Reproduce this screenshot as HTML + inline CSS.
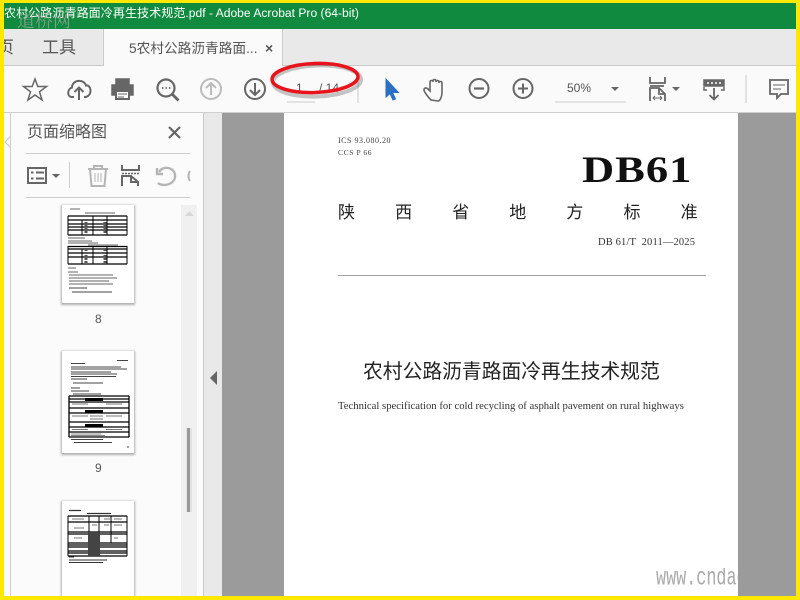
<!DOCTYPE html>
<html><head><meta charset="utf-8">
<style>
html,body{margin:0;padding:0;width:800px;height:600px;overflow:hidden;background:#fff}
body{position:relative;font-family:"Liberation Sans","Noto Sans CJK SC",sans-serif}
.a{position:absolute;white-space:nowrap}
svg{position:absolute;overflow:visible}
.thumb{position:absolute;left:62px;width:72px;background:#fff;box-shadow:0 1px 2px 1px rgba(0,0,0,.3);overflow:hidden}
</style></head><body>

<!-- title -->
<div class="a" style="left:0;top:3px;width:800px;height:26px;background:#0f8a3e"></div>
<div class="a" style="left:4px;top:4px;color:#fff;font-size:12.100px;line-height:18px">农村公路沥青路面冷再生技术规范.pdf - Adobe Acrobat Pro (64-bit)</div>
<!-- tabs -->
<div class="a" style="left:0;top:29px;width:800px;height:36px;background:#e9e9e9;border-bottom:1px solid #c8c8c8"></div>
<div class="a" style="left:103px;top:29px;width:180px;height:37px;background:#fafafa;border-left:1px solid #ccc;border-right:1px solid #ccc;box-sizing:border-box"></div>
<div class="a" style="left:-3px;top:38px;font-size:17px;color:#555;line-height:20px">页</div>
<div class="a" style="left:42px;top:38px;font-size:17px;color:#555;line-height:20px">工具</div>
<div class="a" style="left:129px;top:40px;font-size:13.700px;color:#555;line-height:18px">5农村公路沥青路面...</div>
<div class="a" style="left:265px;top:39px;font-size:14px;color:#555;font-weight:bold;line-height:18px">×</div>
<!-- toolbar -->
<div class="a" style="left:0;top:66px;width:800px;height:46px;background:#fafafa;border-bottom:2px solid #cfcfcf"></div>

<svg style="left:0;top:0" width="800" height="112" fill="none" stroke="#666" stroke-width="2">
 <path d="M35 79l2.800 7.500h8.700l-7 5.300 2.600 8.200-7.100-5-7.100 5 2.600-8.200-7-5.300h8.700z" stroke-width="1.500"/>
 <path d="M74 97h-2c-5 0-5-8 0-9.500 0-8 12-9 14-2 5-1 7 9 0 11.500h-2M79 100V88M74.500 92l4.500-4.500 4.500 4.500"/>
 <path d="M116 85v-6h13v6M116 95h-4v-10h21v10h-4" fill="#666" stroke-width="1.500"/><rect x="116" y="91" width="13" height="8" fill="#fff"/><path d="M118 94h9M118 97h6" stroke-width="1"/>
 <circle cx="166" cy="88" r="8.500" stroke-width="2.200"/><path d="M172 94l6.500 6.500" stroke-width="2.800"/><path d="M162 88h1.500M165.500 88h1.500M169 88h1.500" stroke-width="1.800"/>
 <g stroke="#bcbcbc"><circle cx="211" cy="89" r="10"/><path d="M211 95V83M206 88l5-5 5 5"/></g>
 <circle cx="255" cy="89" r="10"/><path d="M255 83v12M250 90l5 5 5-5"/>
 <path d="M287 102h28M358 78v25" stroke="#ccc" stroke-width="1"/>
 <path d="M386 79v18l4-3.500 3 6.500 2.500-1-3-6.500h6z" fill="#2a6fc4" stroke="#2a6fc4" stroke-width="1"/>
 <path d="M431 100c-2-2-7-8-7-10 0-2 2-3 4-1l2 2v-9c0-2 3-2 3 0v-1c0-2 3-2 3 0v1c0-2 3-2 3 0v1c0-2 3-2 3 0v9c0 5-2 9-4 9z" stroke-width="1.600"/>
 <circle cx="479" cy="88.500" r="9.500"/><path d="M474 88.500h10" stroke-width="2.200"/>
 <circle cx="523" cy="88.500" r="9.500"/><path d="M518 88.500h10M523 83.500v10"/>
 <path d="M555 102h71" stroke="#ccc" stroke-width="1"/>
 <path d="M611 87h8l-4 4z" fill="#666" stroke="none"/>
 <path d="M650 77v6h15v-6M650 86h14M650 101v-13h9l6 6v7M659 88v6h6" stroke-width="1.800"/>
 <path d="M653 98h9M653 98l2-2M653 98l2 2M662 98l-2-2M662 98l-2 2" stroke-width="1"/>
 <path d="M672 87h8l-4 4z" fill="#666" stroke="none"/>
 <rect x="704" y="80" width="20" height="6" fill="#666" stroke-width="1.500"/><path d="M707 83h2M711 83h2M715 83h2M719 83h2" stroke="#fff" stroke-width="1.500"/><path d="M704 87v3h3M724 87v3h-3" stroke-width="1.500"/>
 <path d="M714 88v11M709.500 95l4.500 4.500 4.500-4.500" stroke-width="1.800"/>
 <path d="M746 75v28" stroke="#c8c8c8" stroke-width="1"/>
 <path d="M770 80h18v14h-7l-4 4v-4h-7z" stroke-width="1.800"/><path d="M773 85h12M773 89h8" stroke-width="1"/>
</svg>
<div class="a" style="left:296px;top:81px;font-size:12px;color:#555;line-height:14px">1</div>
<div class="a" style="left:319px;top:81px;font-size:12px;color:#555;line-height:14px">/ 14</div>
<div class="a" style="left:567px;top:81px;font-size:12px;color:#555;line-height:14px">50%</div>

<!-- sidebar -->
<div class="a" style="left:0;top:113px;width:204px;height:487px;background:#fbfbfb"></div>
<div class="a" style="left:10px;top:113px;width:1px;height:487px;background:#cfcfcf"></div>
<div class="a" style="left:203px;top:113px;width:19px;height:487px;background:#e9e9e9;border-left:1px solid #c8c8c8;box-sizing:border-box"></div>
<div class="a" style="left:181px;top:205px;width:16px;height:395px;background:#f0f0f0"></div>
<div class="a" style="left:186px;top:428px;width:6px;height:84px;background:#e2e2e2"></div>
<div class="a" style="left:187px;top:428px;width:3px;height:84px;background:#999"></div>
<svg style="left:0;top:0" width="222" height="400" fill="none" stroke="#666" stroke-width="2">
 <path d="M10 137l-5 5 5 5" stroke="#ccc" stroke-width="1" fill="#fbfbfb"/>
 <path d="M26 153.500h164M26 197.500h164" stroke="#ccc" stroke-width="1"/>
 <path d="M169 127l11 11M180 127l-11 11" stroke-width="2.200"/>
 <rect x="28" y="168" width="18" height="15" stroke-width="2"/><path d="M31 172.500h2.500M31 178.500h2.500M36 172.500h8M36 178.500h8" stroke-width="2"/>
 <path d="M52 174h8l-4 4z" fill="#666" stroke="none"/>
 <path d="M69.500 162v26" stroke="#ccc" stroke-width="1"/>
 <g stroke="#b5b5b5"><path d="M88 169h20M94 169v-3h8v3M90 169l1.500 17h13l1.500-17" stroke-width="2"/><path d="M95 173v9M98 173v9M101 173v9" stroke-width="1"/></g>
 <path d="M122 165v5h17v-5" stroke-width="2"/><path d="M122 173.500h17" stroke-width="1.500" stroke-dasharray="2 1"/><path d="M122 186v-10h9l7 6v4M131 176v6h7" stroke-width="2"/>
 <path d="M158 183c4 4 17 2 17-7 0-9-12-11-16-4M157 168v6h6" stroke="#b5b5b5" stroke-width="2.400"/>
 <path d="M190 171c-2 3-2 7 0 10" stroke="#b5b5b5" stroke-width="2"/>
 <path d="M185 216h9l-4.500-5z" fill="#d8d8d8" stroke="none"/>
 <path d="M217 371v14l-7-7z" fill="#666" stroke="none"/>
</svg>
<div class="a" style="left:27px;top:122px;font-size:16px;color:#555;line-height:22px">页面缩略图</div>

<!-- thumbs -->
<div class="thumb" style="top:205px;height:98px">
<svg width="72" height="98" fill="none" stroke="#000" stroke-width="1.300">
 <path d="M8 4h10M23 8h30" stroke="#666" stroke-width="1"/>
 <path d="M6 11h59M6 15h59M6 19h59M6 22h59M6 25h59M6 30h59"/>
 <path d="M6 11v19M65 11v19M20 15v15M31 11v19M45 11v19" stroke-width="1"/>
 <path d="M24 14v16M43 14v16" stroke="#555" stroke-width="3" stroke-dasharray="2 1"/>
 <path d="M6 33h17M6 36h24M6 38h30M26 40h30" stroke="#666" stroke-width="1"/>
 <path d="M6 41.500h59M6 44h59M6 48h59M6 52h59M6 59h59"/>
 <path d="M6 41v18M65 41v18M20 44v15M31 41v18M45 41v18" stroke-width="1"/>
 <path d="M24 44v15M43 44v15" stroke="#555" stroke-width="3" stroke-dasharray="2 1"/>
 <path d="M6 63h8M6 67h10" stroke="#666" stroke-width="1"/>
 <path d="M7 70h44M7 73h48M7 76h40M7 79h44" stroke="#666" stroke-width="1"/>
 <path d="M7 83h18M10 87h40" stroke="#444" stroke-width="1"/>
</svg></div>
<div class="a" style="left:95px;top:312px;font-size:12px;color:#555;line-height:14px">8</div>

<div class="thumb" style="top:351px;height:102px">
<svg width="72" height="102" fill="none" stroke="#000" stroke-width="1.300">
 <path d="M55 9.500h11M9 12.500h14M9 16h50M9 18h56M9 21h40M9 23h46M9 25.500h45M9 28h16M11 32h30M9 37h9M9 40h18M11 43h28" stroke="#444" stroke-width="1"/>
 <path d="M7 45h60M7 48h60M7 51h60M7 57h60M7 62h60M7 71h60M7 76h60M7 81h60M7 86h60"/>
 <path d="M7 45v41M67 45v41" stroke-width="1.300"/>
 <rect x="23" y="47" width="18" height="3" fill="#000" stroke="none"/>
 <rect x="23" y="59" width="18" height="2.500" fill="#000" stroke="none"/>
 <rect x="23" y="73" width="18" height="2.500" fill="#000" stroke="none"/>
 <path d="M10 53h16M44 53h16M10 65h16M28 65h13M28 68h13M44 65h16M10 78.500h16M44 78.500h16" stroke="#777" stroke-width="1"/>
 <path d="M9 83h30M9 84.500h34" stroke="#666" stroke-width=".8"/>
 <path d="M9 88.500h32M12 91.500h38M65 96h2" stroke="#444" stroke-width="1"/>
</svg></div>
<div class="a" style="left:95px;top:461px;font-size:12px;color:#555;line-height:14px">9</div>

<div class="thumb" style="top:501px;height:110px">
<svg width="72" height="110" fill="none" stroke="#000" stroke-width="1.300">
 <path d="M7 9.500h12M25 12.500h24" stroke="#333"/>
 <path d="M6 15h59M6 21h59M6 31h59M6 33h59M6 42h59M6 44h59M6 46h59M6 50h59M6 52h59M6 55h59"/>
 <path d="M6 15v40M65 15v40M27 15v16M37 15v40M49 15v27" stroke-width="1"/>
 <path d="M10 18h12M42 18h6M52 18h8M42 24h5M52 24h8M12 27h10M30 24h5" stroke="#777" stroke-width="1"/>
 <rect x="26" y="31" width="12" height="24" fill="#444" stroke="none"/>
 <path d="M12 37h8M52 37h4" stroke="#777" stroke-width="1"/>
 <path d="M7 56h5M7 59h38M7 61.500h34" stroke="#333" stroke-width="1"/>
</svg></div>

<!-- doc area -->
<div class="a" style="left:222px;top:113px;width:574px;height:487px;background:#9b9b9b"></div>
<div class="a" style="left:284px;top:113px;width:454px;height:487px;background:#fff"></div>

<div class="a" style="left:338px;top:136px;font-family:'Liberation Serif',serif;font-size:8px;color:#444;letter-spacing:.5px;line-height:10px">ICS 93.080.20</div>
<div class="a" style="left:338px;top:148px;font-family:'Liberation Serif',serif;font-size:7.500px;color:#444;letter-spacing:.6px;line-height:10px">CCS P 66</div>
<div class="a" style="left:582px;top:149px;font-family:'Liberation Serif',serif;font-size:37.500px;font-weight:bold;color:#111;line-height:44px;letter-spacing:.8px;transform:scaleX(1.190);transform-origin:0 0">DB61</div>
<div class="a" style="left:338px;top:202px;font-size:17px;line-height:22px;color:#222;font-family:'Liberation Serif','Noto Sans CJK SC',serif;letter-spacing:40.100px">陕西省地方标准</div>
<div class="a" style="left:598px;top:237px;font-family:'Liberation Serif',serif;font-size:10.500px;color:#333;line-height:12px;letter-spacing:.15px">DB 61/T&nbsp; 2011—2025</div>
<div class="a" style="left:338px;top:275px;width:368px;height:1px;background:#a0a0a0"></div>
<div class="a" style="left:363px;top:361px;font-size:19.800px;color:#222;line-height:22px;font-family:'Liberation Sans','Noto Sans CJK SC',sans-serif">农村公路沥青路面冷再生技术规范</div>
<div class="a" style="left:338px;top:400px;font-family:'Liberation Serif',serif;font-size:10.700px;color:#333;line-height:13px">Technical specification for cold recycling of asphalt pavement on rural highways</div>

<!-- watermark -->
<div class="a" style="left:656px;top:568px;width:82px;height:28px;overflow:hidden">
 <div style="font-family:'Liberation Mono',monospace;font-size:16.800px;line-height:16px;color:#aaa;transform:scaleY(1.500);transform-origin:0 0;white-space:nowrap">www.cndac</div>
</div>
<div class="a" style="left:17px;top:10px;font-size:18px;line-height:22px;color:rgba(165,165,165,.75);font-family:'Liberation Serif','Noto Serif CJK SC',serif">道桥网</div>

<!-- red ellipse -->
<svg style="left:0;top:0" width="800" height="120" fill="none">
 <ellipse cx="317" cy="81" rx="44" ry="15.500" stroke="#000" stroke-opacity=".22" stroke-width="4" transform="rotate(-2 317 81)"/>
 <ellipse cx="315" cy="78" rx="43" ry="14.500" stroke="#e8141c" stroke-width="3.500" transform="rotate(-2 315 78)"/>
</svg>

<!-- yellow frame -->
<div class="a" style="left:0;top:0;width:800px;height:3px;background:#ffe800"></div>
<div class="a" style="left:0;bottom:0;width:800px;height:4px;background:#ffe800"></div>
<div class="a" style="left:0;top:0;width:4px;height:600px;background:#ffe800"></div>
<div class="a" style="right:0;top:0;width:4px;height:600px;background:#ffe800"></div>
</body></html>
